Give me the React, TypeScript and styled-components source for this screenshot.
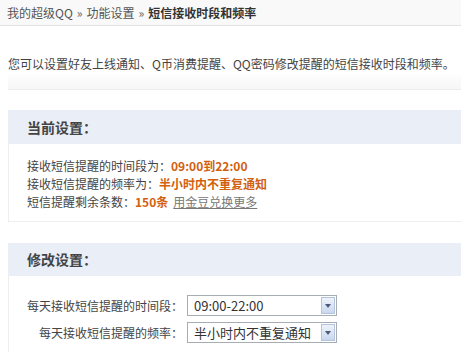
import { createGlobalStyle, styled } from "styled-components"

const Global = createGlobalStyle`
  body {
    margin: 0;
    background: #fff;
    font-family: "Noto Sans CJK SC", "Liberation Sans", sans-serif;
    font-size: 12px;
    color: #333;
  }
`

const Crumbs = styled.div`
  height: 25px;
  line-height: 25px;
  padding-left: 7px;
  background: #f9f9f9;
  border-bottom: 1px solid #e2e2e2;
  color: #555;
  white-space: nowrap;
  overflow: hidden;
`
const Sep = styled.span`
  margin: 0 4px;
  color: #666;
`
const Current = styled.b`
  color: #333;
`

const Intro = styled.div`
  margin-left: 8px;
  padding-top: 29px;
`
const IntroText = styled.p`
  margin: 0;
  line-height: 18px;
  color: #444;
  white-space: nowrap;
`
const Fade = styled.div`
  height: 16px;
  background: linear-gradient(#fff, #f6f6f6);
  border-bottom: 1px solid #ececec;
`

const Panel = styled.section<{ $top: number }>`
  margin: ${p => p.$top}px 0 0 8px;
`
const Head = styled.h3<{ $h: number }>`
  margin: 0;
  height: ${p => p.$h}px;
  line-height: ${p => p.$h}px;
  padding-left: 19px;
  background: #eaeef6;
  font-size: 14px;
  font-weight: bold;
  color: #444;
`
const Body = styled.div<{ $pad: string }>`
  padding: ${p => p.$pad};
  border-left: 1px solid #eeeeee;
  border-bottom: 1px solid #eeeeee;
`
const Line = styled.div`
  line-height: 18px;
  color: #444;
  white-space: nowrap;
`
const Value = styled.b`
  color: #d2600f;
`
const More = styled.a`
  margin-left: 5px;
  color: #777;
  text-decoration: underline;
`

const Row = styled.div`
  display: flex;
  align-items: center;
  & + & {
    margin-top: 6px;
  }
`
const Label = styled.label`
  width: 156px;
  margin-right: 4px;
  text-align: right;
  color: #444;
  white-space: nowrap;
`
const Select = styled.div`
  position: relative;
  box-sizing: border-box;
  width: 150px;
  height: 21px;
  line-height: 19px;
  padding-left: 6px;
  border: 1px solid #a7adb4;
  background: #fff;
  color: #333;
  font-size: 13px;
`
const Arrow = styled.span`
  position: absolute;
  right: 1px;
  top: 1px;
  width: 14px;
  height: 17px;
  box-sizing: border-box;
  border: 1px solid #b3c4dc;
  background: linear-gradient(#eef3fb, #c9d7ee);
  display: flex;
  align-items: center;
  justify-content: center;
  &::after {
    content: "";
    border-left: 3px solid transparent;
    border-right: 3px solid transparent;
    border-top: 4px solid #4a5a78;
  }
`

export default function App() {
  return (
    <>
      <Global />
      <Crumbs>
        我的超级QQ<Sep>»</Sep>功能设置<Sep>»</Sep><Current>短信接收时段和频率</Current>
      </Crumbs>
      <Intro>
        <IntroText>您可以设置好友上线通知、Q币消费提醒、QQ密码修改提醒的短信接收时段和频率。</IntroText>
        <Fade />
      </Intro>
      <Panel $top={20}>
        <Head $h={34}>当前设置：</Head>
        <Body $pad="13px 0 10px 18px">
          <Line>接收短信提醒的时间段为：<Value>09:00到22:00</Value></Line>
          <Line>接收短信提醒的频率为：<Value>半小时内不重复通知</Value></Line>
          <Line>短信提醒剩余条数：<Value>150条</Value><More href="#">用金豆兑换更多</More></Line>
        </Body>
      </Panel>
      <Panel $top={21}>
        <Head $h={33}>修改设置：</Head>
        <Body $pad="19px 0 12px 18px">
          <Row>
            <Label>每天接收短信提醒的时间段：</Label>
            <Select>09:00-22:00<Arrow /></Select>
          </Row>
          <Row>
            <Label>每天接收短信提醒的频率：</Label>
            <Select>半小时内不重复通知<Arrow /></Select>
          </Row>
        </Body>
      </Panel>
    </>
  )
}
